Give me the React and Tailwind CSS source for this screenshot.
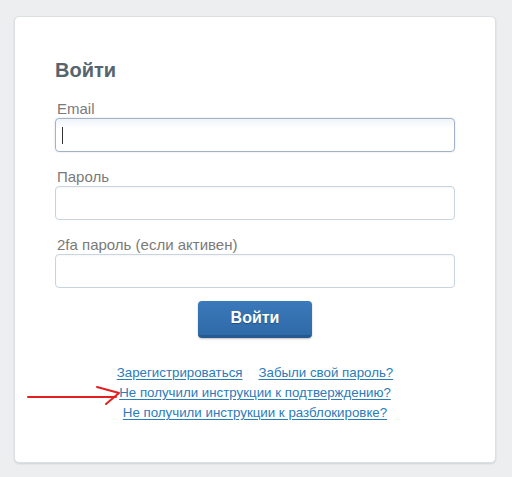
const fieldClass =
  'h-[34px] w-full rounded-[4px] border border-[#c8d4df] bg-white shadow-[inset_0_1px_2px_rgba(0,0,0,0.04)]';

function Field({ label, focused }) {
  return (
    <div className="flex flex-col">
      <label className="h-[18px] pl-[2px] text-[15px] leading-[18px] text-[#7a7a7a]">{label}</label>
      {focused ? (
        <div className="flex h-[34px] w-full items-center rounded-[4px] border border-[#a3b3c7] bg-gradient-to-b from-[#eef4fb] to-white to-[30%] pl-[6px] shadow-[0_0_2px_rgba(120,150,190,0.35)]">
          <span className="h-[17px] w-px bg-[#333]" />
        </div>
      ) : (
        <div className={fieldClass} />
      )}
    </div>
  );
}

export default function App() {
  return (
    <div className="h-[477px] w-[512px] bg-[#eceef0] pl-[14px] pt-[16px] font-['Liberation_Sans',Arial,sans-serif]">
      <div className="relative flex h-[447px] w-[482px] flex-col rounded-[5px] border border-[#dcdfe2] bg-white px-[40px] pt-[41px] shadow-[0_1px_2px_rgba(0,0,0,0.12)]">
        <h1 className="h-[24px] text-[20px] font-bold leading-[24px] text-[#56646e]">Войти</h1>

        <div className="mt-[18px] flex flex-col gap-[16px]">
          <Field label="Email" focused />
          <Field label="Пароль" />
          <Field label="2fa пароль (если активен)" />
        </div>

        <div className="mt-[13px] flex justify-center">
          <button className="h-[37px] w-[114px] rounded-[4px] border-b-[3px] border-[#245a90] bg-gradient-to-b from-[#3a79ba] to-[#2f6aa8] text-[16px] font-bold text-white shadow-[0_1px_2px_rgba(0,0,0,0.25)] [text-shadow:0_1px_1px_rgba(0,0,0,0.3)]">
            Войти
          </button>
        </div>

        <div className="mt-[25px] flex flex-col items-center text-[13.3px] leading-[20px] text-[#2b7bb9]">
          <div className="flex gap-[16px]">
            <a href="#" className="underline underline-offset-2">Зарегистрироваться</a>
            <a href="#" className="underline underline-offset-2">Забыли свой пароль?</a>
          </div>
          <a href="#" className="underline underline-offset-2">Не получили инструкции к подтверждению?</a>
          <a href="#" className="underline underline-offset-2">Не получили инструкции к разблокировке?</a>
        </div>
      </div>

      <svg className="absolute left-0 top-0" width="512" height="477" viewBox="0 0 512 477" fill="none">
        <path d="M28 397 L116 397" stroke="#e3201f" strokeWidth="2" strokeLinecap="round" />
        <path d="M97 387 L119 393 L106 404" stroke="#e3201f" strokeWidth="2" strokeLinecap="round" strokeLinejoin="round" />
      </svg>
    </div>
  );
}
